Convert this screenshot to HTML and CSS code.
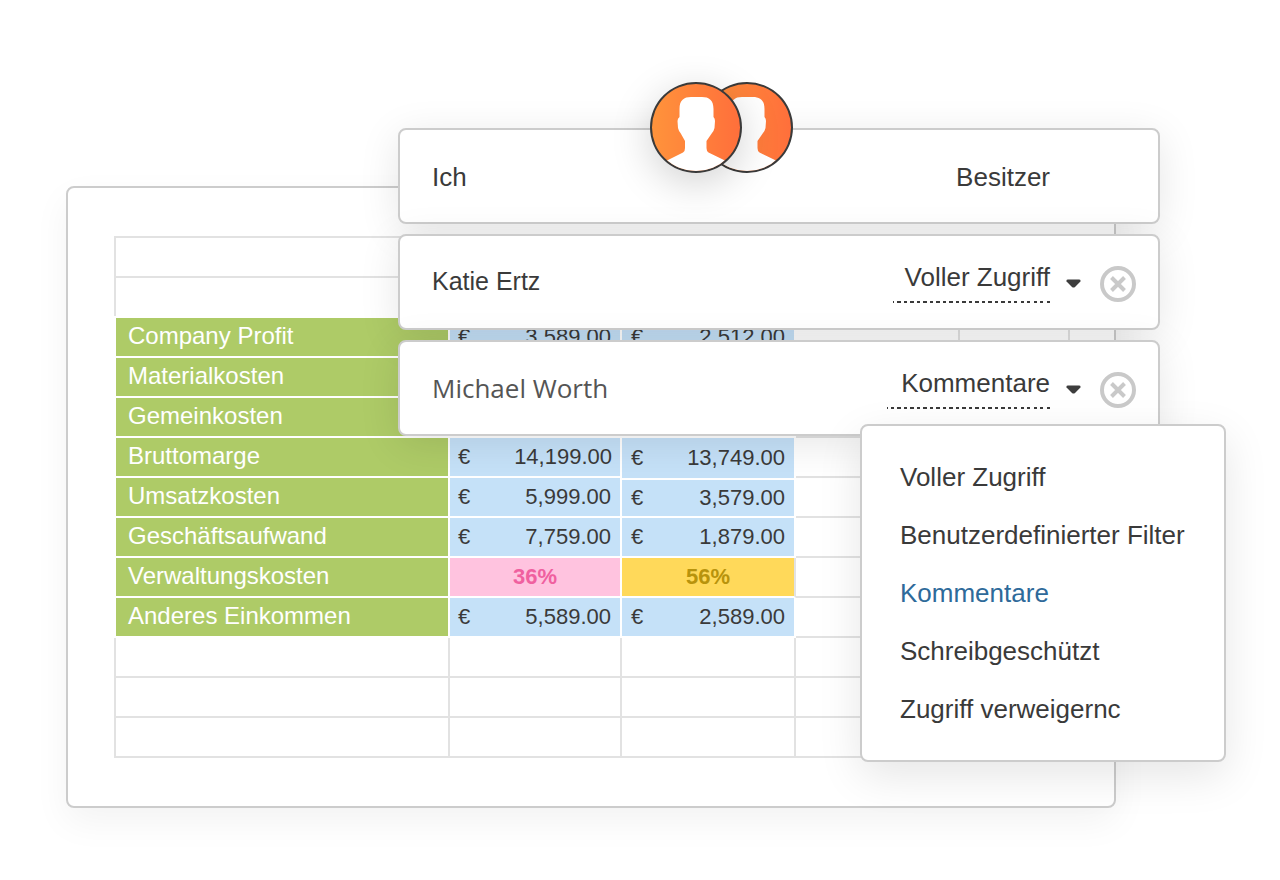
FILE: index.html
```html
<!DOCTYPE html>
<html lang="de">
<head>
<meta charset="utf-8">
<title>Freigabe</title>
<link rel="stylesheet" href="styles.css">
</head>
<body>
<div class="stage">
  <section class="sheet">
    <div class="table">
      <div class="cell"></div><div class="cell"></div><div class="cell"></div><div class="cell"></div><div class="cell"></div><div class="cell end"></div>
      <div class="cell"></div><div class="cell"></div><div class="cell"></div><div class="cell"></div><div class="cell"></div><div class="cell end"></div>

      <div class="cell label first">Company Profit</div>
      <div class="cell money"><span>€</span><span>3,589.00</span></div>
      <div class="cell money"><span>€</span><span>2,512.00</span></div>
      <div class="cell"></div><div class="cell"></div><div class="cell end"></div>

      <div class="cell label">Materialkosten</div>
      <div class="cell money"></div><div class="cell money"></div>
      <div class="cell"></div><div class="cell"></div><div class="cell end"></div>

      <div class="cell label">Gemeinkosten</div>
      <div class="cell money"></div><div class="cell money"></div>
      <div class="cell"></div><div class="cell"></div><div class="cell end"></div>

      <div class="cell label">Bruttomarge</div>
      <div class="cell money wide"><span>€</span><span>14,199.00</span></div>
      <div class="cell money grow"><span>€</span><span>13,749.00</span></div>
      <div class="cell"></div><div class="cell"></div><div class="cell end"></div>

      <div class="cell label">Umsatzkosten</div>
      <div class="cell money"><span>€</span><span>5,999.00</span></div>
      <div class="cell money shrink"><span>€</span><span>3,579.00</span></div>
      <div class="cell"></div><div class="cell"></div><div class="cell end"></div>

      <div class="cell label">Geschäftsaufwand</div>
      <div class="cell money"><span>€</span><span>7,759.00</span></div>
      <div class="cell money"><span>€</span><span>1,879.00</span></div>
      <div class="cell"></div><div class="cell"></div><div class="cell end"></div>

      <div class="cell label">Verwaltungskosten</div>
      <div class="cell pct pink">36%</div>
      <div class="cell pct yellow">56%</div>
      <div class="cell"></div><div class="cell"></div><div class="cell end"></div>

      <div class="cell label">Anderes Einkommen</div>
      <div class="cell money"><span>€</span><span>5,589.00</span></div>
      <div class="cell money"><span>€</span><span>2,589.00</span></div>
      <div class="cell"></div><div class="cell"></div><div class="cell end"></div>

      <div class="cell"></div><div class="cell"></div><div class="cell"></div><div class="cell"></div><div class="cell"></div><div class="cell end"></div>
      <div class="cell"></div><div class="cell"></div><div class="cell"></div><div class="cell"></div><div class="cell"></div><div class="cell end"></div>
      <div class="cell"></div><div class="cell"></div><div class="cell"></div><div class="cell"></div><div class="cell"></div><div class="cell end"></div>
    </div>
  </section>

  <div class="cards">
    <div class="card">
      <span class="name name-ich">Ich</span>
      <span class="owner">Besitzer</span>
    </div>
    <div class="card">
      <span class="name name-katie">Katie Ertz</span>
      <div class="perm">
        <span class="role role-full">Voller Zugriff</span>
        <svg class="caret" viewBox="0 0 15 9" aria-hidden="true"><path d="M2 0.500H13Q15 0.500 14.400 2.400L9 8Q7.500 9.200 6 8L0.600 2.400Q0 0.500 2 0.500Z"/></svg>
        <svg class="remove" viewBox="0 0 36 36" aria-hidden="true"><circle cx="18" cy="18" r="16"/><path d="M11.500 11.500L24.500 24.500M24.500 11.500L11.500 24.500"/></svg>
      </div>
    </div>
    <div class="card">
      <span class="name name-michael">Michael Worth</span>
      <div class="perm">
        <span class="role role-comment">Kommentare</span>
        <svg class="caret" viewBox="0 0 15 9" aria-hidden="true"><path d="M2 0.500H13Q15 0.500 14.400 2.400L9 8Q7.500 9.200 6 8L0.600 2.400Q0 0.500 2 0.500Z"/></svg>
        <svg class="remove" viewBox="0 0 36 36" aria-hidden="true"><circle cx="18" cy="18" r="16"/><path d="M11.500 11.500L24.500 24.500M24.500 11.500L11.500 24.500"/></svg>
      </div>
    </div>
  </div>

  <div class="avatars">
    <div class="avatar avatar-back">
      <svg viewBox="0 0 92 92" aria-hidden="true"><path d="M16 79L33 70.500Q35 69.500 35 66L35 59L30.500 51Q28.500 48.500 28 46L27.500 39Q27.500 36.500 29.500 35L29.500 27C29.500 18 34 15 41 15L52 15C59 15 63.500 18 63.500 27L63.500 35Q65 36.500 65 39L64.500 46Q64 48.500 62 51L56.500 59L56.500 66Q56.500 69.500 58.500 70.500L76 79L76 92L16 92Z"/></svg>
    </div>
    <div class="avatar avatar-front">
      <svg viewBox="0 0 92 92" aria-hidden="true"><path d="M16 79L33 70.500Q35 69.500 35 66L35 59L30.500 51Q28.500 48.500 28 46L27.500 39Q27.500 36.500 29.500 35L29.500 27C29.500 18 34 15 41 15L52 15C59 15 63.500 18 63.500 27L63.500 35Q65 36.500 65 39L64.500 46Q64 48.500 62 51L56.500 59L56.500 66Q56.500 69.500 58.500 70.500L76 79L76 92L16 92Z"/></svg>
    </div>
  </div>

  <ul class="menu">
    <li>Voller Zugriff</li>
    <li>Benutzerdefinierter Filter</li>
    <li class="active">Kommentare</li>
    <li>Schreibgeschützt</li>
    <li>Zugriff verweigernc</li>
  </ul>
</div>
</body>
</html>
```

FILE: styles.css
```css
* { box-sizing: border-box; }
html, body { margin: 0; padding: 0; background: #fff; }
body { font-family: "Liberation Sans", Arial, sans-serif; color: #3a3a3a; }

.stage { position: relative; width: 1280px; height: 880px; overflow: hidden; }

/* sheet */
.sheet {
  position: absolute; left: 66px; top: 186px; width: 1050px; height: 622px;
  padding: 48px 0 0 46px;
  background: #fff; border: 2px solid #ccc; border-radius: 8px;
  box-shadow: 0 14px 36px rgba(0,0,0,.05);
}
.table {
  display: grid;
  grid-template-columns: 334px 172px 174px 164px 110px 44px;
  grid-auto-rows: 40px;
  border-left: 2px solid #e2e2e2;
  border-top: 2px solid #e2e2e2;
}
.cell { border-right: 2px solid #e2e2e2; border-bottom: 2px solid #e2e2e2; }
.cell.end { border-right: 0; }
.label {
  display: flex; align-items: center; padding: 0 0 2px 12px;
  background: #aecb67; color: #fff; font-size: 24px;
  border-color: #fff; background-clip: padding-box;
  box-shadow: -2px 0 0 #fff;
}
.label.first { box-shadow: -2px 0 0 #fff, 0 -2px 0 #fff, -2px -2px 0 #fff; }
.money {
  display: flex; justify-content: space-between; align-items: center;
  padding: 0 9px 0 8px;
  background: #c5e1f8; background-clip: padding-box; border-color: #fff;
  font-size: 22px;
}
.money:nth-child(6n+3) { padding-left: 9px; }
.wide { padding-right: 8px; }
.grow { margin-bottom: -2px; }
.shrink { margin-top: 2px; }
.pct {
  display: flex; justify-content: center; align-items: center;
  background-clip: padding-box; font-size: 22px; font-weight: 700;
}
.pink { background-color: #ffc3df; color: #f0609f; border-color: #fff; }
.yellow { background-color: #ffd95a; color: #b8930c; border-color: #fff #e2e2e2 #fff #fff; }

/* share cards */
.cards {
  position: absolute; left: 398px; top: 128px; width: 762px;
  display: flex; flex-direction: column; gap: 10px;
}
.card {
  position: relative; height: 96px; padding: 0 22px 0 32px;
  display: flex; justify-content: space-between; align-items: center;
  background: #fff; border: 2px solid #ccc; border-radius: 8px;
  box-shadow: 0 8px 40px rgba(0,0,0,.1);
  font-size: 26px;
}
.name-ich { margin-top: 2px; }
.name-katie { font-size: 25px; margin-top: -2px; }
.name-michael { font-family: "Open Sans", sans-serif; font-size: 26px; color: #555; }
.owner { margin: 2px 86px 0 0; }
.perm { display: flex; align-items: center; }
.role {
  display: block; padding-bottom: 11px; text-align: right; line-height: 30px;
  background: repeating-linear-gradient(270deg, #3a3a3a 0 3px, transparent 3px 6.500px) bottom / 100% 2px no-repeat;
}
.role-full { width: 157px; }
.role-comment { width: 163px; }
.caret { width: 15px; height: 9px; margin: 2px 0 0 16px; fill: #3d3d3d; }
.remove { width: 36px; height: 36px; margin: 4px 0 0 19px; fill: none; stroke: #c9c9c9; stroke-width: 4; }

/* avatars */
.avatars { position: absolute; left: 650px; top: 82px; width: 143px; height: 91px; }
.avatar {
  position: absolute; top: 0; width: 92px; height: 91px; overflow: hidden;
  border: 2px solid #3a3a3a; border-radius: 50%;
  background: linear-gradient(90deg, #ff933b, #ff6f3b);
}
.avatar svg { display: block; width: 92px; height: 92px; margin: -2px; fill: #fff; }
.avatar-back { left: 51px; }
.avatar-front { left: 0; box-shadow: 0 10px 40px rgba(0,0,0,.18); }

/* dropdown */
.menu {
  position: absolute; left: 860px; top: 424px; width: 366px; height: 338px;
  margin: 0; padding: 22px 0 0 38px; list-style: none;
  background: #fff; border: 2px solid #ccc; border-radius: 8px;
  box-shadow: 0 14px 44px rgba(0,0,0,.1);
  font-size: 26px;
}
.menu li { height: 58px; line-height: 58px; white-space: nowrap; }
.menu .active { color: #2e6a9a; }
```
